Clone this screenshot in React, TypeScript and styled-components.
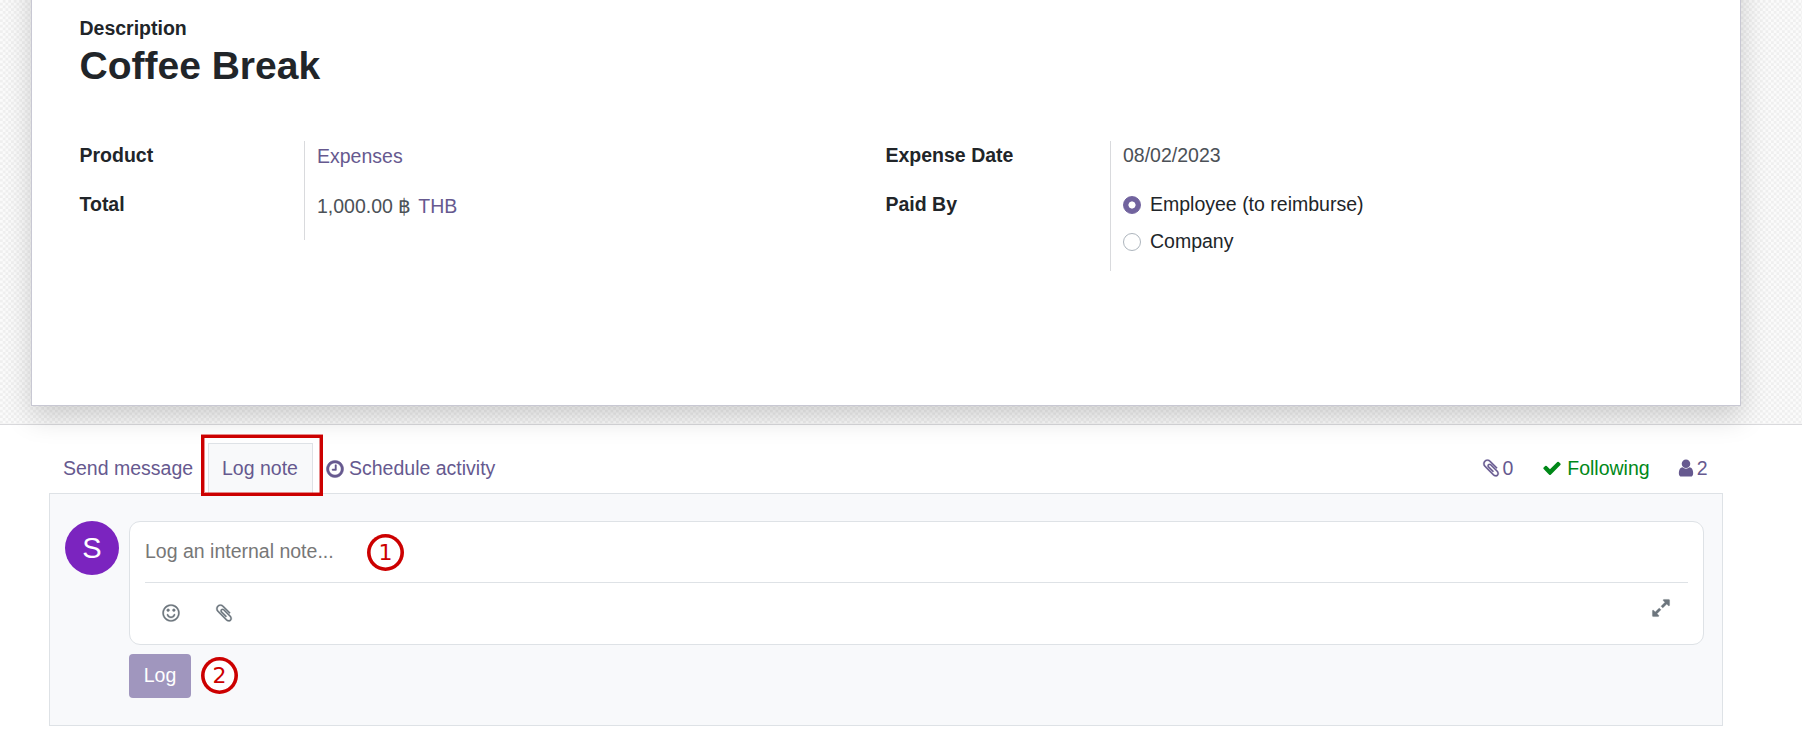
import React from "react";
import styled, { createGlobalStyle } from "styled-components";

const Global = createGlobalStyle`
  * { box-sizing: border-box; }
  body { margin: 0; background: #fff; color: #212529; font: 19.5px/29px "Liberation Sans", Arial, sans-serif; }
`;
const Page = styled.main`height: 753px; overflow: hidden;`;
const SheetArea = styled.section`
  display: flow-root;
  position: relative;
  height: 425px;
  padding: 0 61px 0 31px;
  border-bottom: 1px solid #d9d9dc;
  background: repeating-conic-gradient(#efefef 0 25%, #fbfbfb 0 50%) 0 0 / 5.5px 5.5px;
`;
const Sheet = styled.article`
  height: 466px;
  margin-top: -60px;
  padding: 73px 47.5px 0;
  background: #fff;
  border: 1px solid #c8c8d3;
  box-shadow: 0 11px 26px rgba(0, 0, 0, 0.17);
`;
const FieldLabel = styled.div`font-weight: 700; height: 29px;`;
const Title = styled.h1`margin: 0; font-size: 39px; line-height: 46px; font-weight: 700;`;
const Groups = styled.div`display: grid; grid-template-columns: 806px 1fr; margin: 52px 0 0; align-items: start;`;
const Group = styled.div<{ $h: number }>`display: flex; height: ${(p) => p.$h}px;`;
const Labels = styled.div`width: 224.5px;
  ${FieldLabel} { margin-bottom: 20px; }
`;
const Values = styled.div<{ $top?: number }>`
  border-left: 1px solid #d9dadd;
  padding: ${(p) => p.$top ?? 0}px 0 0 12px;
`;
const Value = styled.div<{ $gap?: number }>`
  color: #4c5157; height: 29px; margin-bottom: ${(p) => p.$gap ?? 20}px;
`;
const Link = styled.span`color: #66598f;`;
const Currency = styled(Link)`margin-left: 7px;`;
const RadioRow = styled.label`display: flex; align-items: center; height: 29px; margin-bottom: 8px; gap: 9px;`;
const Radio = styled.span<{ $on?: boolean }>`
  width: 18px; height: 18px; border-radius: 50%;
  border: 1px solid ${(p) => (p.$on ? "#71639e" : "#adb5bd")};
  ${(p) => p.$on && "background: radial-gradient(circle, #fff 3.2px, #71639e 3.9px);"}
`;

const Chatter = styled.section`padding: 18px 79px 0 49px;`;
const Topbar = styled.div`display: flex; height: 50px; color: #66598f; align-items: stretch;`;
const Tab = styled.button<{ $active?: boolean; $w?: number; $pad: number }>`
  font: inherit; color: inherit; white-space: nowrap;
  padding: 0 0 0 ${(p) => p.$pad}px;
  ${(p) => p.$w && `width: ${p.$w}px;`}
  display: flex; align-items: center; gap: 4px;
  background: ${(p) => (p.$active ? "#f8f9fa" : "transparent")};
  border: 1px solid ${(p) => (p.$active ? "#dee2e6" : "transparent")};
  border-bottom: 0;
  position: relative;
`;
const Highlight = styled.span`
  position: absolute; left: -8px; top: -9px; width: 122px; height: 61px;
  border: 3px solid #c00; z-index: 2;
  box-shadow: 0 -1px 0 rgba(204, 0, 0, 0.45), inset 1px -1px 0 rgba(204, 0, 0, 0.45), inset -1px 0 0 rgba(204, 0, 0, 0.45);
`;
const Spacer = styled.div`flex: 1;`;
const Stat = styled.span<{ $gap: number; $end: number; $green?: boolean }>`
  display: flex; align-items: center; gap: ${(p) => p.$gap}px; margin-right: ${(p) => p.$end}px;
  ${(p) => p.$green && "color: #008818;"}
`;
const Composer = styled.div`
  display: flex; height: 233px; padding: 27px 18px 0 15px; gap: 10px;
  border: 1px solid #dee2e6; background: #f8f9fb;
`;
const Avatar = styled.div`
  width: 54px; height: 54px; border-radius: 50%; background: #7b24bf; color: #fff;
  font-size: 29px; display: flex; align-items: center; justify-content: center;
`;
const Editor = styled.div`flex: 1;`;
const InputBox = styled.div`
  height: 124px; padding: 0 15px; border: 1px solid #dee2e6; border-radius: 11px; background: #fff;
`;
const InputLine = styled.div`
  display: flex; align-items: center; height: 61px; color: #777; border-bottom: 1px solid #dee2e6;
`;
const Placeholder = styled.span`width: 222px; padding-bottom: 1px;`;
const Tools = styled.div`display: flex; height: 60px; padding: 0 17px 0 16px; align-items: center; color: #6c757d; gap: 33px;`;
const Raised = styled.span`display: flex; margin-bottom: 10px;`;
const Actions = styled.div`display: flex; align-items: center; margin-top: 9px; gap: 10px;`;
const LogButton = styled.button`
  font: inherit; width: 62px; height: 44px; border: 0; border-radius: 4px;
  background: #a096be; color: #fff; padding: 0 0 2px;
`;
const Step = styled.span<{ $top?: number }>`
  width: 37px; height: 37px; border-radius: 50%; color: #c00;
  box-shadow: inset 0 0 0 3.6px #c00; background: #fff;
  font: 22px/1 "DejaVu Sans", sans-serif; display: flex; align-items: center; justify-content: center;
  margin-top: ${(p) => p.$top ?? -1}px;
`;
const Glyph = styled.svg<{ $stroke: number }>`
  display: block; flex: none; fill: currentColor; width: 20px; height: 20px;
  stroke: currentColor; stroke-width: ${(p) => p.$stroke};
`;

const paths = {
  check: "M1671 566q0 40-28 68l-724 724-136 136q-28 28-68 28t-68-28l-136-136-362-362q-28-28-28-68t28-68l136-136q28-28 68-28t68 28l294 295 656-657q28-28 68-28t68 28l136 136q28 28 28 68z",
  clock: "M1024 544v448q0 14-9 23t-23 9h-320q-14 0-23-9t-9-23v-64q0-14 9-23t23-9h224v-352q0-14 9-23t23-9h64q14 0 23 9t9 23zm416 352q0-148-73-273t-198-198-273-73-273 73-198 198-73 273 73 273 198 198 273 73 273-73 198-198 73-273zm224 0q0 209-103 385.5t-279.5 279.5-385.5 103-385.5-103-279.5-279.5-103-385.5 103-385.5 279.5-279.5 385.5-103 385.5 103 279.5 279.5 103 385.5z",
  user: "M1536 1399q0 109-62.5 187t-150.5 78h-854q-88 0-150.5-78t-62.5-187q0-85 8.5-160.5t31.5-152 58.5-131 94-89 134.5-34.5q131 128 313 128t313-128q76 0 134.5 34.5t94 89 58.5 131 31.5 152 8.5 160.5zm-256-887q0 159-112.5 271.5t-271.5 112.5-271.5-112.5-112.5-271.5 112.5-271.5 271.5-112.5 271.5 112.5 112.5 271.5z",
  expand: "M883 1056q0 13-10 23l-332 332 144 144q19 19 19 45t-19 45-45 19h-448q-26 0-45-19t-19-45v-448q0-26 19-45t45-19 45 19l144 144 332-332q10-10 23-10t23 10l114 114q10 10 10 23zm781-864v448q0 26-19 45t-45 19-45-19l-144-144-332 332q-10 10-23 10t-23-10l-114-114q-10-10-10-23t10-23l332-332-144-144q-19-19-19-45t19-45 45-19h448q26 0 45 19t19 45z",
  clip: "M1596 1385q0 117-79 196t-196 79q-135 0-235-100l-777-776q-113-115-113-271 0-159 110-270t269-111q158 0 273 113l605 606q10 10 10 22 0 16-30.5 46.5t-46.5 30.5q-13 0-23-10l-606-607q-79-77-181-77-106 0-179 75t-73 181q0 105 76 181l776 777q63 63 145 63 64 0 106-42t42-106q0-82-63-145l-581-581q-26-24-60-24-29 0-48 19t-19 48q0 32 25 59l410 410q10 10 10 22 0 16-31 47t-47 31q-12 0-22-10l-410-410q-63-61-63-149 0-82 57-139t139-57q88 0 149 63l581 581q100 98 100 235z",
  smile: "M1262 1075q-37 121-138 195t-228 74-228-74-138-195q-8-25 4-48.5t38-31.5q25-8 48.5 4t31.5 38q25 80 92.5 129.5t151.5 49.5 151.5-49.5 92.5-129.5q8-26 32-38t49-4 37 31.5 4 48.5zm-494-435q0 53-37.5 90.5t-90.5 37.5-90.5-37.5-37.5-90.5 37.5-90.5 90.5-37.5 90.5 37.5 37.5 90.5zm512 0q0 53-37.5 90.5t-90.5 37.5-90.5-37.5-37.5-90.5 37.5-90.5 90.5-37.5 90.5 37.5 37.5 90.5zm256 256q0-130-51-248.5t-136.5-204-204-136.5-248.5-51-248.5 51-204 136.5-136.5 204-51 248.5 51 248.5 136.5 204 204 136.5 248.5 51 248.5-51 204-136.5 136.5-204 51-248.5zm128 0q0 209-103 385.5t-279.5 279.5-385.5 103-385.5-103-279.5-279.5-103-385.5 103-385.5 279.5-279.5 385.5-103 385.5 103 279.5 279.5 103 385.5z",
};
const Icon = ({ name, stroke = 0 }: { name: keyof typeof paths; stroke?: number }) => (
  <Glyph $stroke={stroke} viewBox="0 0 1792 1792" aria-hidden="true"><path d={paths[name]} /></Glyph>
);

export default function App() {
  return (
    <Page>
      <Global />
      <SheetArea>
        <Sheet>
          <FieldLabel>Description</FieldLabel>
          <Title>Coffee Break</Title>
          <Groups>
            <Group $h={99}>
              <Labels><FieldLabel>Product</FieldLabel><FieldLabel>Total</FieldLabel></Labels>
              <Values $top={1}>
                <Value $gap={21}><Link>Expenses</Link></Value>
                <Value>1,000.00 ฿<Currency>THB</Currency></Value>
              </Values>
            </Group>
            <Group $h={130}>
              <Labels><FieldLabel>Expense Date</FieldLabel><FieldLabel>Paid By</FieldLabel></Labels>
              <Values>
                <Value>08/02/2023</Value>
                <RadioRow><Radio $on />Employee (to reimburse)</RadioRow>
                <RadioRow><Radio />Company</RadioRow>
              </Values>
            </Group>
          </Groups>
        </Sheet>
      </SheetArea>
      <Chatter>
        <Topbar>
          <Tab $w={159} $pad={13}>Send message</Tab>
          <Tab $active $w={105} $pad={13}>Log note<Highlight /></Tab>
          <Tab $pad={11}><Icon name="clock" stroke={40} />Schedule activity</Tab>
          <Spacer />
          <Stat $gap={1.5} $end={29}><Icon name="clip" stroke={24} />0</Stat>
          <Stat $gap={5} $end={26.5} $green><Icon name="check" />Following</Stat>
          <Stat $gap={0.5} $end={15.5}><Icon name="user" />2</Stat>
        </Topbar>
        <Composer>
          <Avatar>S</Avatar>
          <Editor>
            <InputBox>
              <InputLine><Placeholder>Log an internal note...</Placeholder><Step $top={1}>1</Step></InputLine>
              <Tools>
                <Icon name="smile" stroke={30} /><Icon name="clip" stroke={24} /><Spacer />
                <Raised><Icon name="expand" stroke={30} /></Raised>
              </Tools>
            </InputBox>
            <Actions><LogButton>Log</LogButton><Step>2</Step></Actions>
          </Editor>
        </Composer>
      </Chatter>
    </Page>
  );
}
